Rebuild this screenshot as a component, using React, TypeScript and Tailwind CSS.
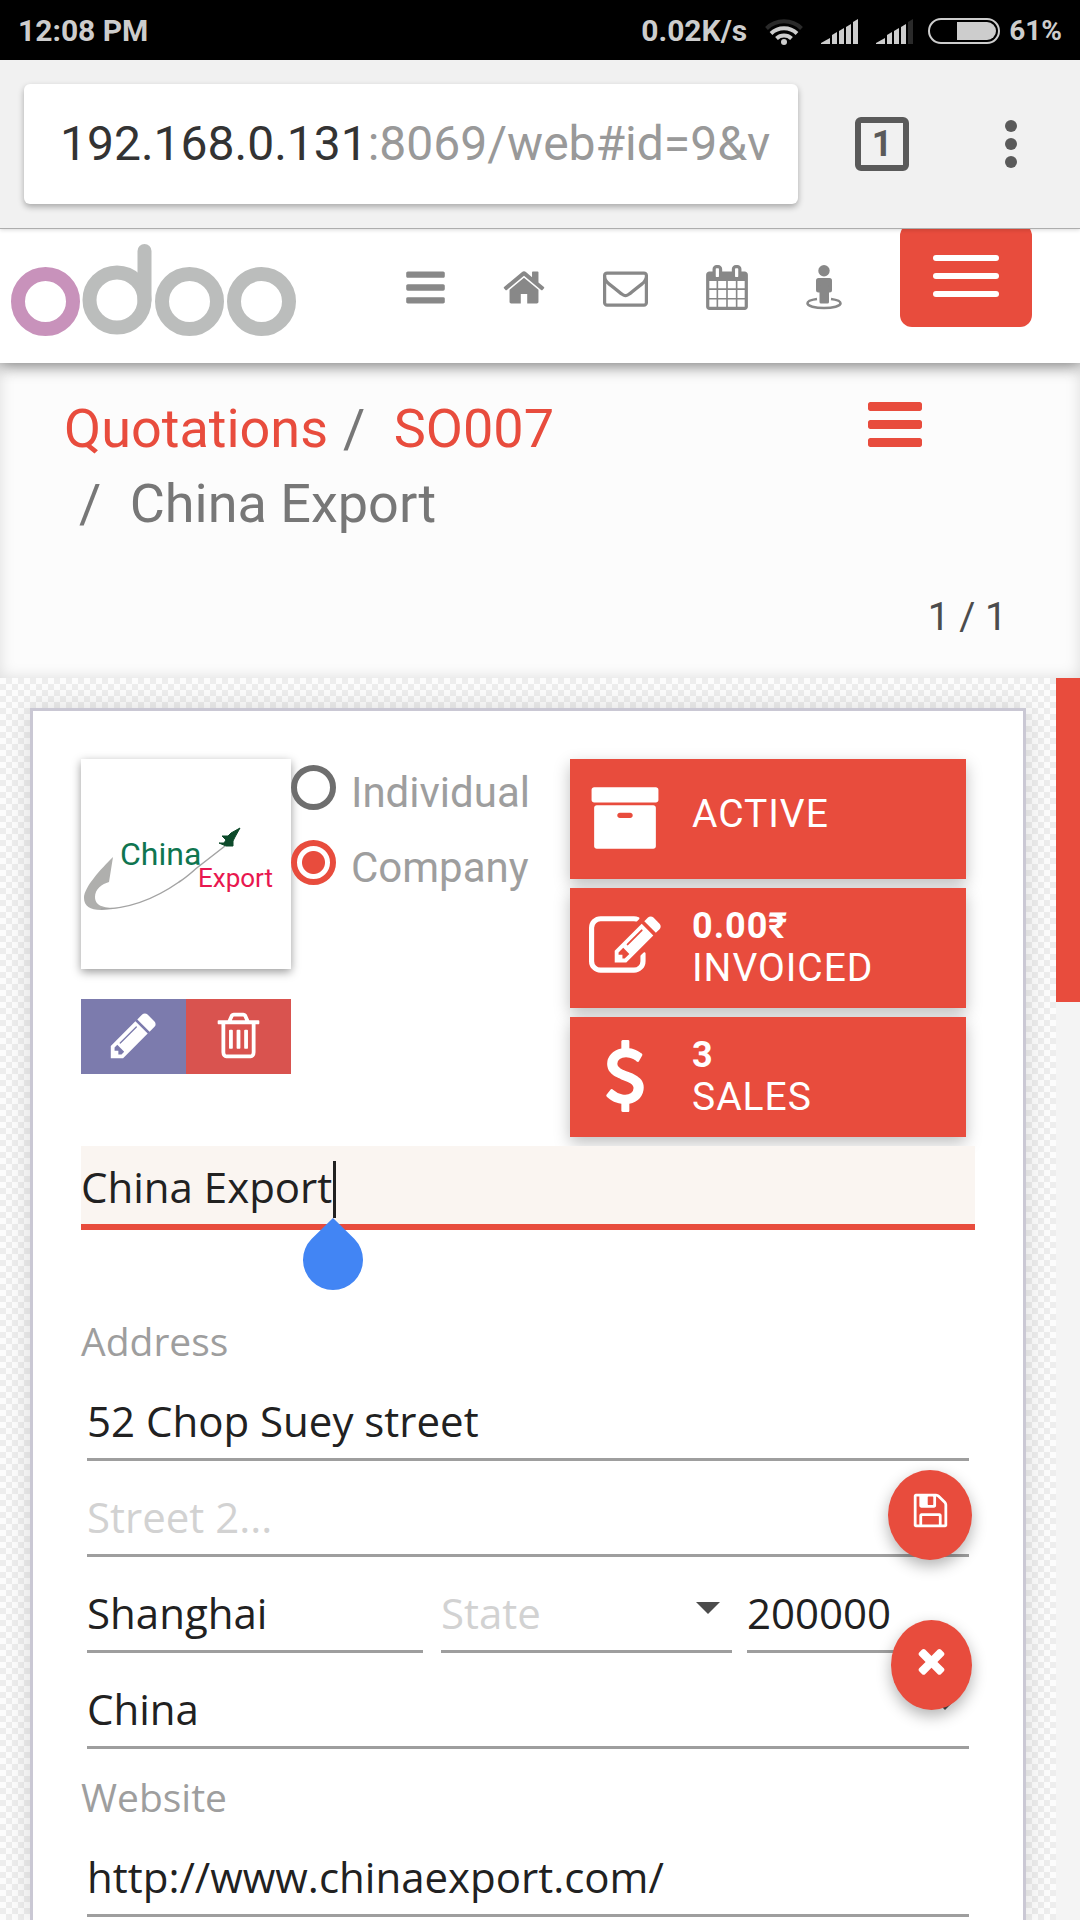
import type { ReactNode } from "react";

const ICONS = {
  bars: "M1664 1344v128q0 26-19 45t-45 19h-1408q-26 0-45-19t-19-45v-128q0-26 19-45t45-19h1408q26 0 45 19t19 45zm0-512v128q0 26-19 45t-45 19h-1408q-26 0-45-19t-19-45v-128q0-26 19-45t45-19h1408q26 0 45 19t19 45zm0-512v128q0 26-19 45t-45 19h-1408q-26 0-45-19t-19-45v-128q0-26 19-45t45-19h1408q26 0 45 19t19 45z",
  home: "M1472 992v480q0 26-19 45t-45 19h-384v-384h-256v384h-384q-26 0-45-19t-19-45v-480q0-1 .5-3t.5-3l575-474 575 474q1 2 1 6zm223-69l-62 74q-8 9-21 11h-3q-13 0-21-7l-692-577-692 577q-12 8-24 7-13-2-21-11l-62-74q-8-10-7-23.5t11-21.5l719-599q32-26 76-26t76 26l244 204v-195q0-14 9-23t23-9h192q14 0 23 9t9 23v408l219 182q10 8 11 21.5t-7 23.5z",
  envelope: "M1664 1504v-768q-32 36-69 66-268 206-426 338-51 43-83 67t-86.5 48.5-102.5 24.5h-2q-48 0-102.5-24.5t-86.5-48.5-83-67q-158-132-426-338-37-30-69-66v768q0 13 9.5 22.5t22.5 9.5h1472q13 0 22.5-9.5t9.5-22.5zm0-1051v-24.5l-.5-13-3-12.5-5.5-9-9-7.5-14-2.5h-1472q-13 0-22.5 9.5t-9.5 22.5q0 168 147 284 193 152 401 317 6 5 35 29.5t46 37.5 44.5 31.5 50.5 27.5 43 9h2q20 0 43-9t50.5-27.5 44.5-31.5 46-37.5 35-29.5q208-165 401-317 54-43 100.5-115.5t46.5-131.5zm128-37v1088q0 66-47 113t-113 47h-1472q-66 0-113-47t-47-113v-1088q0-66 47-113t113-47h1472q66 0 113 47t47 113z",
  calendar: "M192 1664h288v-288h-288v288zm352 0h320v-288h-320v288zm-352-352h288v-320h-288v320zm352 0h320v-320h-320v320zm-352-384h288v-288h-288v288zm736 736h320v-288h-320v288zm-384-736h320v-288h-320v288zm768 736h288v-288h-288v288zm-384-352h320v-320h-320v320zm-352-864v-288q0-13-9.5-22.5t-22.5-9.5h-64q-13 0-22.5 9.5t-9.5 22.5v288q0 13 9.5 22.5t22.5 9.5h64q13 0 22.5-9.5t9.5-22.5zm736 864h288v-320h-288v320zm-384-384h320v-288h-320v288zm384 0h288v-288h-288v288zm32-480v-288q0-13-9.5-22.5t-22.5-9.5h-64q-13 0-22.5 9.5t-9.5 22.5v288q0 13 9.5 22.5t22.5 9.5h64q13 0 22.5-9.5t9.5-22.5zm384-64v1280q0 52-38 90t-90 38h-1408q-52 0-90-38t-38-90v-1280q0-52 38-90t90-38h128v-96q0-66 47-113t113-47h64q66 0 113 47t47 113v96h384v-96q0-66 47-113t113-47h64q66 0 113 47t47 113v96h128q52 0 90 38t38 90z",
  pencil: "M491 1536l91-91-235-235-91 91v107h128v128h107zm523-928q0-22-22-22-10 0-17 7l-542 542q-7 7-7 17 0 22 22 22 10 0 17-7l542-542q7-7 7-17zm-54-192l416 416-832 832h-416v-416zm683 96q0 53-37 90l-166 166-416-416 166-165q36-38 90-38 53 0 91 38l235 234q37 39 37 91z",
  trash: "M704 736v576q0 14-9 23t-23 9h-64q-14 0-23-9t-9-23v-576q0-14 9-23t23-9h64q14 0 23 9t9 23zm256 0v576q0 14-9 23t-23 9h-64q-14 0-23-9t-9-23v-576q0-14 9-23t23-9h64q14 0 23 9t9 23zm256 0v576q0 14-9 23t-23 9h-64q-14 0-23-9t-9-23v-576q0-14 9-23t23-9h64q14 0 23 9t9 23zm128 724v-948h-896v948q0 22 7 40.5t14.5 27 10.5 8.5h832q3 0 10.5-8.5t14.5-27 7-40.5zm-672-1076h448l-48-117q-7-9-17-11h-317q-10 2-17 11zm928 32v64q0 14-9 23t-23 9h-96v948q0 83-47 143.5t-113 60.5h-832q-66 0-113-58.5t-47-141.5v-952h-96q-14 0-23-9t-9-23v-64q0-14 9-23t23-9h309l70-167q15-37 54-63t79-26h320q40 0 79 26t54 63l70 167h309q14 0 23 9t9 23z",
  floppy: "M512 1536h768v-384h-768v384zm896 0h128v-896q0-14-10-38.5t-20-34.5l-281-281q-10-10-34-20t-39-10v416q0 40-28 68t-68 28h-576q-40 0-68-28t-28-68v-416h-128v1280h128v-416q0-40 28-68t68-28h832q40 0 68 28t28 68v416zm-384-928v-320q0-13-9.5-22.5t-22.5-9.5h-192q-13 0-22.5 9.5t-9.5 22.5v320q0 13 9.5 22.5t22.5 9.5h192q13 0 22.5-9.5t9.5-22.5zm640 32v928q0 40-28 68t-68 28h-1344q-40 0-68-28t-28-68v-1344q0-40 28-68t68-28h928q40 0 88 20t76 48l280 280q28 28 48 76t20 88z",
  times: "M1490 1322q0 40-28 68l-136 136q-28 28-68 28t-68-28l-294-294-294 294q-28 28-68 28t-68-28l-136-136q-28-28-28-68t28-68l294-294-294-294q-28-28-28-68t28-68l136-136q28-28 68-28t68 28l294 294 294-294q28-28 68-28t68 28l136 136q28 28 28 68t-28 68l-294 294 294 294q28 28 28 68z",
  archive: "M1088 832q0-26-19-45t-45-19h-256q-26 0-45 19t-19 45 19 45 45 19h256q26 0 45-19t19-45zm576-192v960q0 26-19 45t-45 19h-1408q-26 0-45-19t-19-45v-960q0-26 19-45t45-19h1408q26 0 45 19t19 45zm64-448v256q0 26-19 45t-45 19h-1536q-26 0-45-19t-19-45v-256q0-26 19-45t45-19h1536q26 0 45 19t19 45z",
  edit: "M888 1184l116-116-152-152-116 116v56h96v96h56zm440-720q-16-16-33 1l-350 350q-17 17-1 33t33-1l350-350q17-17 1-33zm80 594v190q0 119-84.5 203.5t-203.5 84.5h-832q-119 0-203.5-84.5t-84.5-203.5v-832q0-119 84.5-203.5t203.5-84.5h832q63 0 117 25 15 7 18 23 3 17-9 29l-49 49q-14 14-32 8-23-6-45-6h-832q-66 0-113 47t-47 113v832q0 66 47 113t113 47h832q66 0 113-47t47-113v-126q0-13 9-22l64-64q15-15 35-7t20 29zm-96-738l288 288-672 672h-288v-288zm444 132l-92 92-288-288 92-92q28-28 68-28t68 28l152 152q28 28 28 68t-28 68z",
  dollar: "M1362 1185q0 153-99.5 263.5t-258.5 136.5v175q0 14-9 23t-23 9h-135q-13 0-22.5-9.5t-9.5-22.5v-175q-66-9-127.5-31t-101.5-44.5-74-48-46.5-37.5-17.5-18q-17-21-2-41l103-135q7-10 23-12 15-2 24 9l2 2q113 99 243 125 37 8 74 8 81 0 142.5-43t61.5-122q0-28-15-53t-33.5-42-58.5-37.5-66-32-80-32.5q-39-16-61.5-25t-61.5-26.5-62.5-31-56.5-35.5-53.5-42.5-43.5-49-35.5-58-21-66.5-8.5-78q0-138 98-242t255-134v-180q0-13 9.5-22.5t22.5-9.5h135q14 0 23 9t9 23v176q57 6 110.5 23t87 33.5 63.5 37.5 39 29 15 14q17 18 5 38l-81 146q-8 15-23 16-14 3-27-7-3-3-14.5-12t-39-26.5-58.5-32-74.5-26-85.5-11.5q-95 0-155 43t-60 111q0 26 8.5 48t29.5 41.5 39.5 33 56 31 60.5 27 70 27.5q53 20 81 31.5t76 35 75.5 42.5 62 50 53 63.5 31.5 76.5 13 94z",
};

function Icon({ name, className, viewBox = "0 0 1792 1792" }: { name: keyof typeof ICONS; className: string; viewBox?: string }) {
  return (
    <svg viewBox={viewBox} className={className} fill="currentColor" aria-hidden="true">
      <path d={ICONS[name]} />
    </svg>
  );
}

function Signal({ full }: { full: boolean }) {
  return (
    <svg viewBox="0 0 37 25" className="h-[25px] w-[37px]" fill="#cdcdcd" aria-hidden="true">
      <path d="M0 25v-1l9-5v6z" />
      <path d="M11 25v-9l5-3v12z" />
      <path d="M18 25v-13l5-3v16z" />
      <path d="M25 25v-17l5-3v20z" />
      <path d="M32 25v-22l5-3v25z" fill={full ? "#cdcdcd" : "#2a2a2a"} />
    </svg>
  );
}

function StatusBar() {
  return (
    <div className="flex h-[60px] items-center bg-black px-[18px] pt-[2px] text-[30px] leading-none font-bold text-[#cdcdcd]">
      <span>12:08 PM</span>
      <span className="ml-auto">0.02K/s</span>
      <svg viewBox="0 0 38 27" className="ml-[18px] h-[27px] w-[38px]" fill="none" strokeWidth="4" aria-hidden="true">
        <path d="M1.500 10.500a25 25 0 0 1 35 0" stroke="#2a2a2a" />
        <path d="M6 15.500a19 19 0 0 1 26 0" stroke="#cdcdcd" />
        <path d="M11.500 20.500a11 11 0 0 1 15 0" stroke="#cdcdcd" />
        <circle cx="19" cy="24" r="3" fill="#cdcdcd" />
      </svg>
      <div className="ml-[18px] flex gap-[18px]">
        <Signal full />
        <Signal full={false} />
      </div>
      <svg viewBox="0 0 72 26" className="ml-[15px] h-[26px] w-[72px]" aria-hidden="true">
        <rect x="1" y="1" width="70" height="24" rx="12" fill="none" stroke="#cdcdcd" strokeWidth="2" />
        <path d="M29 4h30a9 9 0 0 1 0 18h-30z" fill="#cdcdcd" />
      </svg>
      <span className="ml-[9px] text-[28px]">61%</span>
    </div>
  );
}

function BrowserBar() {
  return (
    <div className="relative z-20 flex h-[168px] items-center bg-[#f1f1f1] pr-[39px] pl-6 shadow-[0_1px_0_#adadad,0_2px_4px_rgba(0,0,0,0.15)]">
      <div className="relative flex h-[120px] min-w-0 flex-1 items-center overflow-hidden rounded-md bg-white px-[36px] text-[48px] whitespace-nowrap shadow-[0_3px_6px_rgba(0,0,0,0.3)]">
        <span className="text-[#333333]">192.168.0.131</span>
        <span className="text-[#999999]">:8069/web#id=9&amp;v</span>
        <input type="url" aria-label="Address bar" className="absolute inset-0 opacity-0" />
      </div>
      <button
        type="button"
        aria-label="Open tabs"
        className="ml-[57px] flex size-[54px] items-center justify-center rounded-md border-6 border-[#5a5a5a] text-[36px] leading-none font-bold text-[#5a5a5a]"
      >
        1
      </button>
      <button type="button" aria-label="More" className="ml-[72px] flex w-[60px] flex-col items-center gap-[6px]">
        <span className="size-[12px] rounded-full bg-[#5a5a5a]" />
        <span className="size-[12px] rounded-full bg-[#5a5a5a]" />
        <span className="size-[12px] rounded-full bg-[#5a5a5a]" />
      </button>
    </div>
  );
}

function OdooLogo() {
  return (
    <svg viewBox="0 0 286 94" className="h-[94px] w-[286px]" fill="none" strokeWidth="14" role="img" aria-label="odoo">
      <circle cx="34.500" cy="58.500" r="27.500" stroke="#c892bb" />
      <g stroke="#bbbdbc" strokeLinecap="round">
        <circle cx="106" cy="57" r="27.500" />
        <path d="M133.500 8v49" />
        <circle cx="178.500" cy="58.500" r="27.500" />
        <circle cx="250.500" cy="58.500" r="27.500" />
      </g>
    </svg>
  );
}

function NavLink({ label, children }: { label: string; children: ReactNode }) {
  return (
    <a href="#" aria-label={label}>
      {children}
    </a>
  );
}

function Header() {
  return (
    <header className="relative z-10 flex h-[135px] items-start bg-white pr-[48px] pl-[11px] shadow-[0_3px_15px_rgba(0,0,0,0.45)]">
      <div className="pt-[15px]">
        <OdooLogo />
      </div>
      <nav className="ml-[109px] flex gap-[58px] pt-[37px] text-[#888888]">
        <NavLink label="Menu">
          <Icon name="bars" viewBox="128 0 1536 1792" className="h-[45px] w-[39px]" />
        </NavLink>
        <NavLink label="Home">
          <Icon name="home" viewBox="64 0 1664 1792" className="h-[45px] w-[42px]" />
        </NavLink>
        <NavLink label="Messages">
          <Icon name="envelope" className="size-[45px]" />
        </NavLink>
        <NavLink label="Calendar">
          <Icon name="calendar" viewBox="64 0 1664 1792" className="h-[45px] w-[42px]" />
        </NavLink>
        <NavLink label="Street view">
          <svg viewBox="0 0 36 45" className="h-[45px] w-[36px]" fill="currentColor" aria-hidden="true">
            <circle cx="18" cy="5.700" r="5.700" />
            <rect x="10" y="13" width="16" height="14.500" rx="2.500" />
            <rect x="13.500" y="20" width="9.500" height="18.500" rx="1.500" />
            <path d="M11 34c-6 .8-9.500 2.500-9.500 4.300 0 2.700 7.400 4.700 16.500 4.700s16.500-2 16.500-4.700c0-1.800-3.500-3.500-9.500-4.300" fill="none" stroke="currentColor" strokeWidth="2.600" />
          </svg>
        </NavLink>
      </nav>
      <button
        type="button"
        aria-label="Toggle navigation"
        className="-mt-1 ml-auto flex h-[103px] w-[132px] flex-col items-center gap-[12px] rounded-xl bg-[#e84c3d] pt-[31px]"
      >
        <span className="h-[6px] w-[66px] rounded-full bg-white" />
        <span className="h-[6px] w-[66px] rounded-full bg-white" />
        <span className="h-[6px] w-[66px] rounded-full bg-white" />
      </button>
    </header>
  );
}

function ControlPanel() {
  return (
    <section className="flex h-[315px] flex-col justify-between bg-[#fcfcfc] pt-[28px] pb-[38px] pl-[64px] shadow-[inset_0_0_15px_rgba(0,0,0,0.13)]">
      <div className="flex items-start justify-between pr-[158px]">
        <ol className="w-2/3 text-[54px] leading-[75px] text-[#777777]">
          <li className="inline">
            <a href="#" className="text-[#e84c3d]">Quotations</a>
          </li>
          <li className="inline">
            <span className="px-[15px]">/</span>{" "}
            <a href="#" className="text-[#e84c3d]">SO007</a>
          </li>
          <li className="block">
            <span className="px-[15px]">/</span> China Export
          </li>
        </ol>
        <button type="button" aria-label="Options" className="pt-[11px] text-[#e84c3d]">
          <Icon name="bars" viewBox="128 256 1536 1280" className="h-[45px] w-[54px]" />
        </button>
      </div>
      <p className="pr-[73px] text-right text-[39px] leading-[45px] text-[#4c4c4c]">1 / 1</p>
    </section>
  );
}

function ChinaExportLogo() {
  return (
    <svg viewBox="0 0 210 210" className="size-[210px] bg-white shadow-[0_3px_9px_rgba(0,0,0,0.4)]" role="img" aria-label="China Export">
      <path d="M32 98C20 110 3 128 3 139C3 147 9 151 20 151L38 149C25 149 14 148 14 138C14 130 21 125 28 123z" fill="#afafad" />
      <path d="M20 150C52 150 78 137 98 123C106 118 112 112 117 108L144 87" fill="none" stroke="#a3a3a3" strokeWidth="1.500" />
      <path d="M159 69L150 74L147 77L141 77L145 81L143 84L138 84L145 87L152 87L152 82L154 78z" fill="#0d4a2a" stroke="#0d4a2a" strokeLinejoin="round" />
      <text x="39" y="106" fontSize="32" fill="#0f7550" className="font-[Roboto,sans-serif]">China</text>
      <text x="117" y="128" fontSize="26" fill="#e8174f" className="font-[Roboto,sans-serif]">Export</text>
    </svg>
  );
}

function Radio({ label, checked }: { label: string; checked?: boolean }) {
  return (
    <label className="flex h-[54px] items-start gap-[15px] text-[42px] leading-[56px] text-[#9e9e9e]">
      <input
        type="radio"
        name="kind"
        defaultChecked={checked}
        className="size-[45px] shrink-0 appearance-none rounded-full border-6 border-[#6e6e6e] bg-white checked:border-[#e84c3d] checked:bg-[radial-gradient(circle,#e84c3d_11px,#ffffff_12px)]"
      />
      {label}
    </label>
  );
}

function Stat({ icon, value, label }: { icon: keyof typeof ICONS; value?: string; label: string }) {
  return (
    <button
      type="button"
      className="flex h-[120px] items-center gap-[31px] bg-[#e84c3d] pb-[2px] pl-[19px] text-left text-white shadow-[0_6px_15px_rgba(0,0,0,0.25)]"
    >
      <Icon name={icon} className="size-[72px]" />
      <span className={value ? "flex flex-col text-[39px] leading-[42px] tracking-wide uppercase" : "pb-2 text-[39px] leading-[42px] tracking-wide uppercase"}>
        {value && <b className="text-[36px] font-bold">{value}</b>}
        <span>{label}</span>
      </span>
    </button>
  );
}

const FIELD =
  "h-[77px] w-full min-w-0 appearance-none rounded-none border-b-3 border-[#9e9e9e] bg-transparent pb-[2px] text-[42px] text-[#212121] placeholder:text-[#d2d2d2]";

function SelectField({ id, label, value, muted }: { id: string; label: string; value: string; muted?: boolean }) {
  return (
    <div className="relative">
      <select id={id} aria-label={label} className={muted ? `${FIELD} text-[#d2d2d2]!` : FIELD}>
        <option>{value}</option>
      </select>
      <svg viewBox="0 0 24 12" className="pointer-events-none absolute top-[26px] right-[12px] h-[12px] w-[24px]" fill="#4c4c4c" aria-hidden="true">
        <path d="M0 0h24l-12 12z" />
      </svg>
    </div>
  );
}

function PartnerForm() {
  return (
    <form className="min-w-0 flex-1 border-3 border-b-0 border-[#cac8d4] bg-white px-[48px] pt-[48px] shadow-[0_0_24px_rgba(0,0,0,0.12)]">
      <div className="flex items-start">
        <div className="w-[210px] shrink-0">
          <ChinaExportLogo />
          <div className="mt-[30px] flex h-[75px] text-white">
            <button type="button" aria-label="Edit image" className="flex flex-1 items-center justify-center bg-[#7c7bad] pb-[2px]">
              <Icon name="pencil" className="size-[53px]" />
            </button>
            <button type="button" aria-label="Delete image" className="flex flex-1 items-center justify-center bg-[#d9534f] pb-[2px]">
              <Icon name="trash" className="size-[53px]" />
            </button>
          </div>
        </div>
        <fieldset className="flex flex-col gap-[21px] pt-[6px]">
          <Radio label="Individual" />
          <Radio label="Company" checked />
        </fieldset>
        <div className="mr-[9px] ml-auto flex w-[396px] flex-col gap-[9px] pb-[9px]">
          <Stat icon="archive" label="Active" />
          <Stat icon="edit" value="0.00₹" label="Invoiced" />
          <Stat icon="dollar" value="3" label="Sales" />
        </div>
      </div>

      <div className="font-['Open_Sans',sans-serif]">
        <div className="relative">
          <input
            aria-label="Name"
            defaultValue="China Export"
            className="block h-[84px] w-full border-b-6 border-[#e84c3d] bg-[#faf5f1] pt-[3px] text-[42px] text-[#212121] outline-none"
          />
          <span className="absolute top-[15px] left-[252px] h-[57px] w-[3px] bg-[#212121]" />
          <svg viewBox="0 0 60 72" className="absolute top-[72px] left-[222px] h-[72px] w-[60px]" fill="#4285f4" aria-hidden="true">
            <path d="M30 0l21.500 21a30 30 0 1 1-43 0z" />
          </svg>
        </div>

        <p className="mt-[84px] text-[39px] leading-[54px] text-[#9e9e9e]">Address</p>
        <div className="mt-[16px] flex flex-col gap-[19px] px-[6px]">
          <input aria-label="Street" defaultValue="52 Chop Suey street" className={FIELD} />
          <input aria-label="Street 2" placeholder="Street 2..." className={FIELD} />
          <div className="grid grid-cols-[336fr_309fr_237fr]">
            <input aria-label="City" defaultValue="Shanghai" className={FIELD} />
            <div className="pl-[18px]">
              <SelectField id="state" label="State" value="State" muted />
            </div>
            <div className="pl-[15px]">
              <input aria-label="ZIP" defaultValue="200000" className={FIELD} />
            </div>
          </div>
          <SelectField id="country" label="Country" value="China" />
        </div>

        <label htmlFor="website" className="mt-[21px] block text-[39px] leading-[54px] text-[#9e9e9e]">
          Website
        </label>
        <div className="mt-[16px] px-[6px]">
          <input id="website" type="url" defaultValue="http://www.chinaexport.com/" className={FIELD} />
        </div>
      </div>
    </form>
  );
}

export default function App() {
  return (
    <div className="flex min-h-screen flex-col bg-white font-[Roboto,sans-serif]">
      <StatusBar />
      <BrowserBar />
      <Header />
      <ControlPanel />
      <main className="flex flex-1">
        <div className="flex min-w-0 flex-1 overflow-hidden bg-[#f9f9f9] bg-[conic-gradient(#ededed_25%,#fcfcfc_0_50%,#ededed_0_75%,#fcfcfc_0)] bg-[length:12px_12px] pt-[30px] pr-[30px] pl-[30px]">
          <PartnerForm />
        </div>
        <div className="w-[24px] shrink-0 bg-[#f4f4f4]">
          <div className="h-[324px] bg-[#e84c3d]" />
        </div>
      </main>
      <div className="fixed right-[108px] bottom-[210px] z-30 flex flex-col items-end gap-[60px] text-white">
        <button
          type="button"
          aria-label="Save"
          className="flex h-[90px] w-[84px] items-center justify-center rounded-[50%] bg-[#e84c3d] pb-[10px] shadow-[0_6px_15px_rgba(0,0,0,0.3)]"
        >
          <Icon name="floppy" className="size-[39px]" />
        </button>
        <button
          type="button"
          aria-label="Discard"
          className="flex h-[90px] w-[81px] items-center justify-center rounded-[50%] bg-[#e84c3d] pb-[10px] shadow-[0_6px_15px_rgba(0,0,0,0.3)]"
        >
          <Icon name="times" className="size-[39px]" />
        </button>
      </div>
    </div>
  );
}
